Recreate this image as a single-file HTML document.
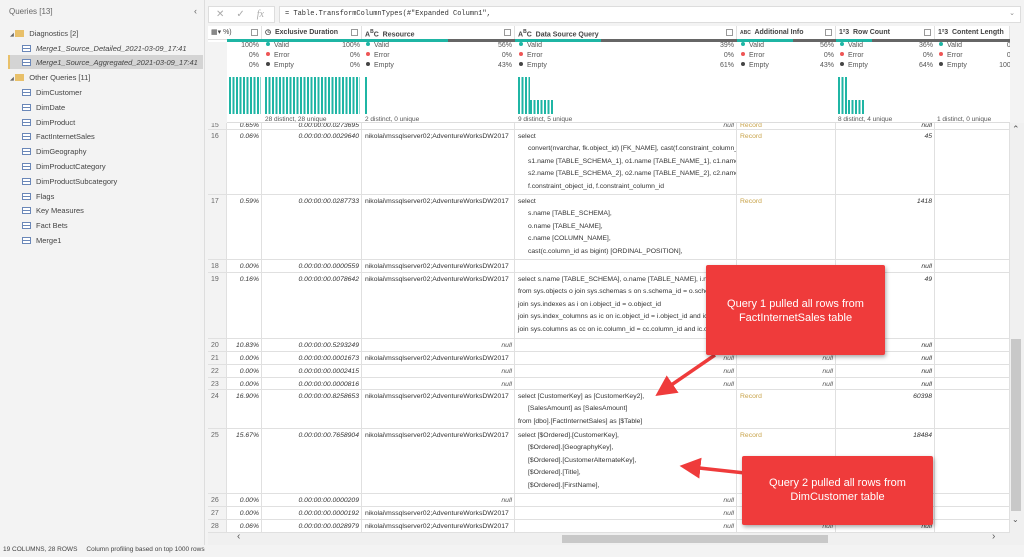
<!DOCTYPE html>
<html><head><meta charset="utf-8"><style>
*{margin:0;padding:0;box-sizing:border-box}
body{width:1024px;height:557px;overflow:hidden;background:#f3f3f3;font-family:"Liberation Sans",sans-serif;color:#333;position:relative}
.a{position:absolute}
.side{left:0;top:0;width:205px;height:545px;background:#f3f3f3;border-right:1px solid #ddd}
.si{position:absolute;font-size:7.5px;color:#444;white-space:nowrap}
.ic{display:inline-block;width:9px;height:7px;border:1px solid #6a87b8;vertical-align:-1px;margin-right:5px;background:linear-gradient(#6a87b8,#6a87b8) 0 2px/100% 1px no-repeat,#fff}
.fd{display:inline-block;width:9px;height:7px;background:#e8c06a;vertical-align:-1px;margin-right:5px}
.grid{left:208px;top:26px;width:802px;height:507px;background:#fff;overflow:hidden}
.row{position:absolute;left:0;width:802px;display:flex;border-bottom:1px solid #e0e0e0;font-size:6.8px;line-height:12.4px;overflow:hidden}
.row>div{border-right:1px solid #e0e0e0;padding:1px 2px 0 3px;white-space:nowrap;overflow:hidden}
.row>div:nth-child(1){width:19px;background:#f3f3f3;color:#666;font-size:7px}
.row>div:nth-child(2){width:35px;text-align:right;font-style:italic}
.row>div:nth-child(3){width:100px;text-align:right;font-style:italic}
.row>div:nth-child(4){width:153px}
.row>div:nth-child(5){width:222px}
.row>div:nth-child(6){width:99px;color:#c8a34a}
.row>div:nth-child(7){width:99px;text-align:right;font-style:italic}
.row>div:nth-child(8){width:75px}
.row>div.n{text-align:right;font-style:italic;color:#555}
.i{padding-left:10px}
.hd{position:absolute;top:0;height:13px;font-size:7px;font-weight:bold;color:#444;line-height:13px;border-right:1px solid #e0e0e0}
.dd{position:absolute;top:3px;width:7px;height:7px;border:1px solid #999;background:#fff}
.prof{position:absolute;top:15px;font-size:7px;line-height:10px;color:#555}
.dot{display:inline-block;width:4px;height:4px;border-radius:50%;margin:0 4px 1px 2px}
.bars{position:absolute;top:51px;height:37px;background:repeating-linear-gradient(90deg,#1fb5a4 0 2px,#fff 2px 3.5px)}
.box{position:absolute;background:#ef3b3b;color:#fff;font-size:11px;text-align:center;line-height:14px;box-shadow:1px 2px 4px rgba(0,0,0,.35);border-radius:2px}
</style></head><body>
<div class="a side">
<div class="si" style="left:9px;top:7px;font-size:8px;color:#666">Queries [13]</div>
<div class="si" style="left:194px;top:6px;font-size:9px;color:#666">‹</div>
<div class="si" style="left:10px;top:29px"><span style="font-size:5px;color:#666">◢ </span><span class="fd"></span>Diagnostics [2]</div>
<div class="si" style="left:22px;top:44px;font-style:italic"><span class="ic"></span>Merge1_Source_Detailed_2021-03-09_17:41</div>
<div class="a" style="left:8px;top:55px;width:195px;height:14px;background:#d4d4d4;border-left:2px solid #e8c06a"></div>
<div class="si" style="left:22px;top:58px;font-style:italic"><span class="ic"></span>Merge1_Source_Aggregated_2021-03-09_17:41</div>
<div class="si" style="left:10px;top:73px"><span style="font-size:5px;color:#666">◢ </span><span class="fd"></span>Other Queries [11]</div>
<div class="si" style="left:22px;top:88px"><span class="ic"></span>DimCustomer</div>
<div class="si" style="left:22px;top:103px"><span class="ic"></span>DimDate</div>
<div class="si" style="left:22px;top:118px"><span class="ic"></span>DimProduct</div>
<div class="si" style="left:22px;top:132px"><span class="ic"></span>FactInternetSales</div>
<div class="si" style="left:22px;top:147px"><span class="ic"></span>DimGeography</div>
<div class="si" style="left:22px;top:162px"><span class="ic"></span>DimProductCategory</div>
<div class="si" style="left:22px;top:177px"><span class="ic"></span>DimProductSubcategory</div>
<div class="si" style="left:22px;top:192px"><span class="ic"></span>Flags</div>
<div class="si" style="left:22px;top:206px"><span class="ic"></span>Key Measures</div>
<div class="si" style="left:22px;top:221px"><span class="ic"></span>Fact Bets</div>
<div class="si" style="left:22px;top:236px"><span class="ic"></span>Merge1</div>
</div>
<div class="a" style="left:208px;top:6px;width:67px;height:17px;background:#fff;border:1px solid #ddd;font-size:10px;color:#aaa;line-height:15px"><span style="margin-left:7px">✕</span><span style="margin-left:12px">✓</span><span style="margin-left:12px;font-style:italic;font-family:'Liberation Serif'">fx</span></div>
<div class="a" style="left:279px;top:6px;width:742px;height:17px;background:#fff;border:1px solid #ddd;font-family:'Liberation Mono';font-size:7px;line-height:15px;padding-left:5px">= Table.TransformColumnTypes(#"Expanded Column1",<span style="position:absolute;right:5px;color:#888">⌄</span></div>
<div class="grid a">
<div style="position:absolute;left:0;top:0;width:802px;height:14px;background:#fff;border-bottom:1px solid #ddd"></div>
<div class="hd" style="left:0;width:54px;padding-left:3px;font-weight:normal">▦▾ %)<span class="dd" style="left:43px"></span></div>
<div class="hd" style="left:54px;width:100px;padding-left:3px">◷&nbsp; Exclusive Duration<span class="dd" style="left:89px"></span></div>
<div class="hd" style="left:154px;width:153px;padding-left:3px">A<sup style="font-size:5px">B</sup>C&nbsp; Resource<span class="dd" style="left:142px"></span></div>
<div class="hd" style="left:307px;width:222px;padding-left:3px">A<sup style="font-size:5px">B</sup>C&nbsp; Data Source Query<span class="dd" style="left:211px"></span></div>
<div class="hd" style="left:529px;width:99px;padding-left:3px"><span style="font-size:5px">ABC</span>&nbsp; Additional Info<span class="dd" style="left:88px"></span></div>
<div class="hd" style="left:628px;width:99px;padding-left:3px">1²3&nbsp; Row Count<span class="dd" style="left:88px"></span></div>
<div class="hd" style="left:727px;width:75px;padding-left:3px">1²3&nbsp; Content Length</div>
<div class="a" style="left:19px;top:13px;width:783px;height:3px;background:#666"></div>
<div class="a" style="left:19px;top:13px;width:135px;height:3px;background:#1fb5a4"></div>
<div class="a" style="left:154px;top:13px;width:86px;height:3px;background:#1fb5a4"></div>
<div class="a" style="left:307px;top:13px;width:86px;height:3px;background:#1fb5a4"></div>
<div class="a" style="left:529px;top:13px;width:56px;height:3px;background:#1fb5a4"></div>
<div class="a" style="left:628px;top:13px;width:36px;height:3px;background:#1fb5a4"></div>
<div class="a" style="left:0;top:16px;width:802px;height:81px;border-bottom:1px solid #ddd"></div>
<div class="a" style="left:0;top:16px;width:19px;height:81px;background:#f3f3f3"></div>
<div class="prof" style="left:19px;width:35px;text-align:right;padding-right:3px">100%<br>0%<br>0%</div>
<div class="prof" style="left:56px;width:96px"><span class="dot" style="background:#1fb5a4"></span>Valid<span style="float:right">100%</span><br><span class="dot" style="background:#e55"></span>Error<span style="float:right">0%</span><br><span class="dot" style="background:#444"></span>Empty<span style="float:right">0%</span></div>
<div class="prof" style="left:156px;width:148px"><span class="dot" style="background:#1fb5a4"></span>Valid<span style="float:right">56%</span><br><span class="dot" style="background:#e55"></span>Error<span style="float:right">0%</span><br><span class="dot" style="background:#444"></span>Empty<span style="float:right">43%</span></div>
<div class="prof" style="left:309px;width:217px"><span class="dot" style="background:#1fb5a4"></span>Valid<span style="float:right">39%</span><br><span class="dot" style="background:#e55"></span>Error<span style="float:right">0%</span><br><span class="dot" style="background:#444"></span>Empty<span style="float:right">61%</span></div>
<div class="prof" style="left:531px;width:95px"><span class="dot" style="background:#1fb5a4"></span>Valid<span style="float:right">56%</span><br><span class="dot" style="background:#e55"></span>Error<span style="float:right">0%</span><br><span class="dot" style="background:#444"></span>Empty<span style="float:right">43%</span></div>
<div class="prof" style="left:630px;width:95px"><span class="dot" style="background:#1fb5a4"></span>Valid<span style="float:right">36%</span><br><span class="dot" style="background:#e55"></span>Error<span style="float:right">0%</span><br><span class="dot" style="background:#444"></span>Empty<span style="float:right">64%</span></div>
<div class="prof" style="left:729px;width:80px"><span class="dot" style="background:#1fb5a4"></span>Valid<span style="float:right">0%</span><br><span class="dot" style="background:#e55"></span>Error<span style="float:right">0%</span><br><span class="dot" style="background:#444"></span>Empty<span style="float:right">100%</span></div>
<div class="bars" style="left:21px;width:32px"></div>
<div class="bars" style="left:57px;width:95px"></div>
<div class="bars" style="left:157px;width:3px"></div>
<div class="bars" style="left:310px;width:12px"></div>
<div class="bars" style="left:322px;top:74px;height:14px;width:24px"></div>
<div class="bars" style="left:630px;width:10px"></div>
<div class="bars" style="left:640px;top:74px;height:14px;width:16px"></div>
<div class="prof" style="left:57px;top:89px;font-size:6.5px">28 distinct, 28 unique</div>
<div class="prof" style="left:157px;top:89px;font-size:6.5px">2 distinct, 0 unique</div>
<div class="prof" style="left:310px;top:89px;font-size:6.5px">9 distinct, 5 unique</div>
<div class="prof" style="left:630px;top:89px;font-size:6.5px">8 distinct, 4 unique</div>
<div class="prof" style="left:729px;top:89px;font-size:6.5px">1 distinct, 0 unique</div>
<div class="row" style="top:97px;height:7px;line-height:4px"><div>15</div><div>0.65%</div><div>0.00:00:00.0273695</div><div></div><div class="n">null</div><div>Record</div><div>null</div><div></div></div>
<div class="row" style="top:104px;height:65px"><div>16</div><div>0.06%</div><div>0.00:00:00.0029640</div><div>nikolai\mssqlserver02;AdventureWorksDW2017</div><div>select<br><span class="i">convert(nvarchar, fk.object_id) [FK_NAME], cast(f.constraint_column_i</span><br><span class="i">s1.name [TABLE_SCHEMA_1], o1.name [TABLE_NAME_1], c1.name [PK</span><br><span class="i">s2.name [TABLE_SCHEMA_2], o2.name [TABLE_NAME_2], c2.name [PK</span><br><span class="i">f.constraint_object_id, f.constraint_column_id</span></div><div>Record</div><div>45</div><div></div></div>
<div class="row" style="top:169px;height:65px"><div>17</div><div>0.59%</div><div>0.00:00:00.0287733</div><div>nikolai\mssqlserver02;AdventureWorksDW2017</div><div>select<br><span class="i">s.name [TABLE_SCHEMA],</span><br><span class="i">o.name [TABLE_NAME],</span><br><span class="i">c.name [COLUMN_NAME],</span><br><span class="i">cast(c.column_id as bigint) [ORDINAL_POSITION],</span></div><div>Record</div><div>1418</div><div></div></div>
<div class="row" style="top:234px;height:13px"><div>18</div><div>0.00%</div><div>0.00:00:00.0000559</div><div>nikolai\mssqlserver02;AdventureWorksDW2017</div><div></div><div></div><div>null</div><div></div></div>
<div class="row" style="top:247px;height:66px"><div>19</div><div>0.16%</div><div>0.00:00:00.0078642</div><div>nikolai\mssqlserver02;AdventureWorksDW2017</div><div>select s.name [TABLE_SCHEMA], o.name [TABLE_NAME], i.name<br>from sys.objects o join sys.schemas s on s.schema_id = o.schema<br>join sys.indexes as i on i.object_id = o.object_id<br>join sys.index_columns as ic on ic.object_id = i.object_id and ic<br>join sys.columns as cc on ic.column_id = cc.column_id and ic.ob</div><div></div><div>49</div><div></div></div>
<div class="row" style="top:313px;height:13px"><div>20</div><div>10.83%</div><div>0.00:00:00.5293249</div><div class="n">null</div><div></div><div></div><div>null</div><div></div></div>
<div class="row" style="top:326px;height:13px"><div>21</div><div>0.00%</div><div>0.00:00:00.0001673</div><div>nikolai\mssqlserver02;AdventureWorksDW2017</div><div class="n">null</div><div class="n">null</div><div>null</div><div></div></div>
<div class="row" style="top:339px;height:13px"><div>22</div><div>0.00%</div><div>0.00:00:00.0002415</div><div class="n">null</div><div class="n">null</div><div class="n">null</div><div>null</div><div></div></div>
<div class="row" style="top:352px;height:12px"><div>23</div><div>0.00%</div><div>0.00:00:00.0000816</div><div class="n">null</div><div class="n">null</div><div class="n">null</div><div>null</div><div></div></div>
<div class="row" style="top:364px;height:39px"><div>24</div><div>16.90%</div><div>0.00:00:00.8258653</div><div>nikolai\mssqlserver02;AdventureWorksDW2017</div><div>select [CustomerKey] as [CustomerKey2],<br><span class="i">[SalesAmount] as [SalesAmount]</span><br>from [dbo].[FactInternetSales] as [$Table]</div><div>Record</div><div>60398</div><div></div></div>
<div class="row" style="top:403px;height:65px"><div>25</div><div>15.67%</div><div>0.00:00:00.7658904</div><div>nikolai\mssqlserver02;AdventureWorksDW2017</div><div>select [$Ordered].[CustomerKey],<br><span class="i">[$Ordered].[GeographyKey],</span><br><span class="i">[$Ordered].[CustomerAlternateKey],</span><br><span class="i">[$Ordered].[Title],</span><br><span class="i">[$Ordered].[FirstName],</span></div><div>Record</div><div>18484</div><div></div></div>
<div class="row" style="top:468px;height:13px"><div>26</div><div>0.00%</div><div>0.00:00:00.0000209</div><div class="n">null</div><div class="n">null</div><div></div><div></div><div></div></div>
<div class="row" style="top:481px;height:13px"><div>27</div><div>0.00%</div><div>0.00:00:00.0000192</div><div>nikolai\mssqlserver02;AdventureWorksDW2017</div><div class="n">null</div><div></div><div></div><div></div></div>
<div class="row" style="top:494px;height:13px"><div>28</div><div>0.06%</div><div>0.00:00:00.0028979</div><div>nikolai\mssqlserver02;AdventureWorksDW2017</div><div class="n">null</div><div class="n">null</div><div>null</div><div></div></div>
</div>
<div class="a" style="left:1010px;top:123px;width:14px;height:410px;background:#f0f0f0"></div>
<div class="a" style="left:1011px;top:339px;width:10px;height:172px;background:#c8c8c8"></div>
<div class="a" style="left:1012px;top:124px;font-size:9px;color:#555">⌃</div>
<div class="a" style="left:1012px;top:515px;font-size:8px;color:#555">⌄</div>
<div class="a" style="left:208px;top:533px;width:816px;height:12px;background:#f0f0f0"></div>
<div class="a" style="left:562px;top:535px;width:266px;height:8px;background:#c8c8c8"></div>
<div class="a" style="left:237px;top:531px;font-size:10px;color:#555">‹</div>
<div class="a" style="left:992px;top:531px;font-size:10px;color:#555">›</div>
<div class="a" style="left:3px;top:546px;font-size:6.5px;color:#444;white-space:nowrap">19 COLUMNS, 28 ROWS &nbsp;&nbsp;&nbsp; Column profiling based on top 1000 rows</div>
<svg class="a" style="left:0;top:0" width="1024" height="557">
<defs><marker id="ah" markerWidth="6" markerHeight="6" refX="3" refY="3" orient="auto"><path d="M0,0 L6,3 L0,6 Z" fill="#ef3b3b"/></marker></defs>
<line x1="715" y1="355" x2="664" y2="390" stroke="#ef3b3b" stroke-width="3.5" marker-end="url(#ah)"/>
<line x1="745" y1="473" x2="690" y2="467" stroke="#ef3b3b" stroke-width="3.5" marker-end="url(#ah)"/>
</svg>
<div class="box" style="left:706px;top:265px;width:179px;height:90px;padding-top:32px">Query 1 pulled all rows from<br>FactInternetSales table</div>
<div class="box" style="left:742px;top:456px;width:191px;height:69px;padding-top:20px">Query 2 pulled all rows from<br>DimCustomer table</div>
</body></html>
